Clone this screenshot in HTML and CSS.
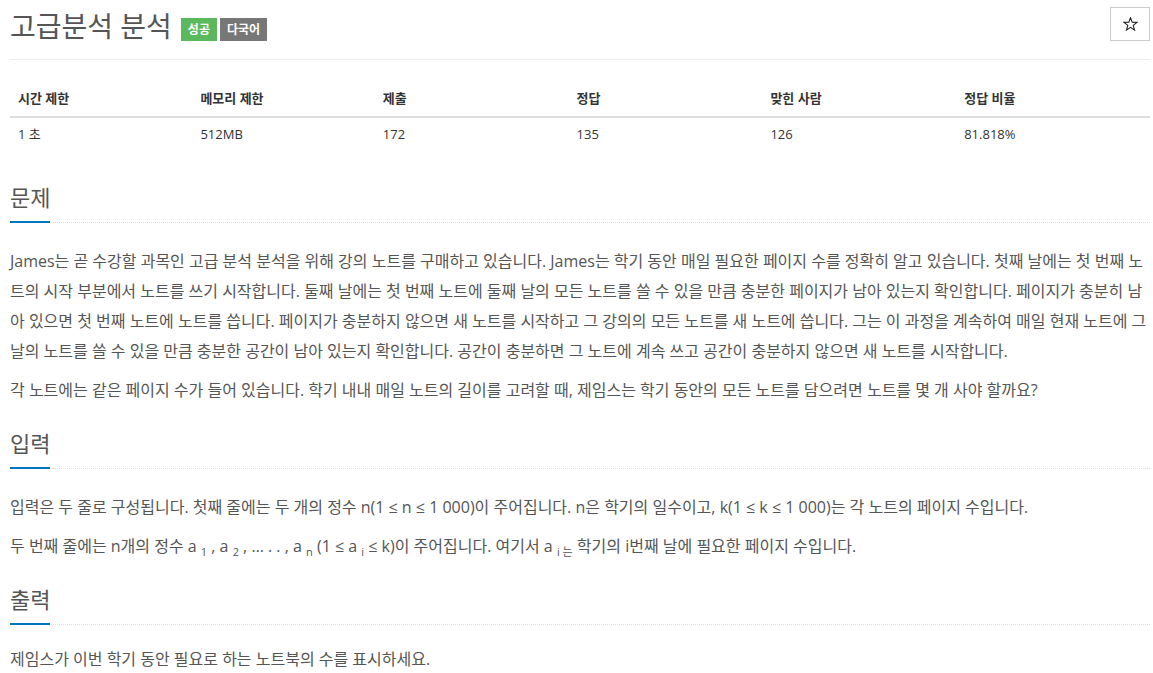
FILE: index.html
```html
<!DOCTYPE html>
<html lang="ko">
<head>
    <meta charset="UTF-8">
    <title>고급분석 분석</title>
    <link rel="stylesheet" href="styles.css">
</head>
<body>
    <div class="page">
        <div class="page-header">
            <h1 class="problem-title"><span class="title-text">고급분석 분석</span><span class="label label-success">성공</span><span class="label label-default">다국어</span></h1>
            <button class="star-btn" type="button" title="즐겨찾기">
                <svg width="15" height="14" viewBox="0 0 15 14">
                    <polygon points="7.5,0.8 9.2,5.3 14,5.4 10.2,8.4 11.6,13.1 7.5,10.3 3.4,13.1 4.8,8.4 1,5.4 5.8,5.3" fill="none" stroke="#222" stroke-width="1.1" stroke-linejoin="miter"/>
                </svg>
            </button>
        </div>

        <table class="problem-info">
            <thead>
                <tr>
                    <th class="col-a">시간 제한</th>
                    <th class="col-a">메모리 제한</th>
                    <th class="col-b">제출</th>
                    <th class="col-b">정답</th>
                    <th class="col-b">맞힌 사람</th>
                    <th class="col-b">정답 비율</th>
                </tr>
            </thead>
            <tbody>
                <tr>
                    <td>1 초</td>
                    <td>512MB</td>
                    <td>172</td>
                    <td>135</td>
                    <td>126</td>
                    <td>81.818%</td>
                </tr>
            </tbody>
        </table>

        <section class="problem-section">
            <div class="headline"><h2>문제</h2></div>
            <div class="problem-text">
                <p>James는 곧 수강할 과목인 고급 분석 분석을 위해 강의 노트를 구매하고 있습니다. James는 학기 동안 매일 필요한 페이지 수를 정확히 알고 있습니다. 첫째 날에는 첫 번째 노트의 시작 부분에서 노트를 쓰기 시작합니다. 둘째 날에는 첫 번째 노트에 둘째 날의 모든 노트를 쓸 수 있을 만큼 충분한 페이지가 남아 있는지 확인합니다. 페이지가 충분히 남아 있으면 첫 번째 노트에 노트를 씁니다. 페이지가 충분하지 않으면 새 노트를 시작하고 그 강의의 모든 노트를 새 노트에 씁니다. 그는 이 과정을 계속하여 매일 현재 노트에 그 날의 노트를 쓸 수 있을 만큼 충분한 공간이 남아 있는지 확인합니다. 공간이 충분하면 그 노트에 계속 쓰고 공간이 충분하지 않으면 새 노트를 시작합니다.</p>
                <p>각 노트에는 같은 페이지 수가 들어 있습니다. 학기 내내 매일 노트의 길이를 고려할 때, 제임스는 학기 동안의 모든 노트를 담으려면 노트를 몇 개 사야 할까요?</p>
            </div>
        </section>

        <section class="problem-section">
            <div class="headline"><h2>입력</h2></div>
            <div class="problem-text">
                <p>입력은 두 줄로 구성됩니다. 첫째 줄에는 두 개의 정수 n(1 ≤ n ≤ 1 000)이 주어집니다. n은 학기의 일수이고, k(1 ≤ k ≤ 1 000)는 각 노트의 페이지 수입니다.</p>
                <p>두 번째 줄에는 n개의 정수 a <sub>1</sub> , a <sub>2</sub> , … . . , a <sub>n</sub> (1 ≤ a <sub>i</sub> ≤ k)이 주어집니다. 여기서 a <sub>i 는</sub> 학기의 i번째 날에 필요한 페이지 수입니다.</p>
            </div>
        </section>

        <section class="problem-section">
            <div class="headline"><h2>출력</h2></div>
            <div class="problem-text problem-output">
                <p>제임스가 이번 학기 동안 필요로 하는 노트북의 수를 표시하세요.</p>
            </div>
        </section>
    </div>
</body>
</html>
```

FILE: styles.css
```css
body {
    margin: 0;
    font-family: "Open Sans", "Noto Sans CJK KR", sans-serif;
    color: #555;
    background: #fff;
}
.page {
    width: 1140px;
    padding: 0 3px 0 10px;
}
.page-header {
    display: flex;
    justify-content: space-between;
    align-items: flex-start;
    padding-top: 7px;
    padding-bottom: 14px;
    border-bottom: 1px solid #eee;
}
.problem-title {
    margin: 0;
    font-size: 28px;
    font-weight: normal;
    line-height: 38px;
    color: #555;
}
.title-text {
    margin-right: 9px;
}
.label {
    display: inline-block;
    vertical-align: 3px;
    padding: 0 7px;
    font-size: 12px;
    font-weight: bold;
    line-height: 23px;
    color: #fff;
}
.label + .label {
    margin-left: 3px;
}
.label-success {
    background: #5cb85c;
}
.label-default {
    background: #777;
}
.star-btn {
    display: flex;
    align-items: center;
    justify-content: center;
    width: 40px;
    height: 34px;
    padding: 0;
    border: 1px solid #ccc;
    background: #fff;
}
.problem-info {
    width: 100%;
    margin-top: 20px;
    border-collapse: collapse;
    font-size: 13px;
    color: #333;
}
.problem-info th,
.problem-info td {
    text-align: left;
    padding: 8px;
    line-height: 20px;
}
.problem-info th {
    font-weight: bold;
    border-bottom: 2px solid #ddd;
}
.problem-info td {
    padding-top: 6px;
}
.col-a {
    width: 16%;
}
.col-b {
    width: 17%;
}
.problem-section {
    margin-top: 30px;
}
.problem-section + .problem-section {
    margin-top: 23px;
}
.headline {
    border-bottom: 1px dotted #ddd;
}
.headline h2 {
    display: inline-block;
    margin: 0 0 -1px 0;
    padding-bottom: 9px;
    font-size: 22px;
    font-weight: normal;
    line-height: 30px;
    color: #555;
    border-bottom: 2px solid #0076c0;
}
.problem-text {
    margin-top: 23px;
    font-size: 16px;
    line-height: 30px;
    word-break: break-all;
}
.problem-output {
    margin-top: 19px;
}
.problem-text p {
    margin: 0 0 9px 0;
}
.problem-text sub {
    font-size: 11px;
    vertical-align: -4px;
    line-height: 0;
}
```
